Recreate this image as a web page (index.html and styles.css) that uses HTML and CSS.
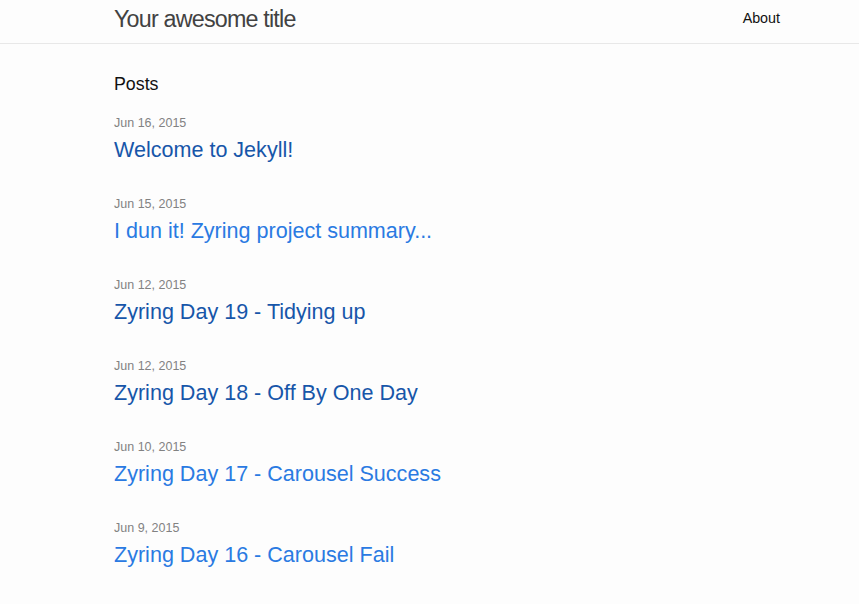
FILE: index.html
```html
<!DOCTYPE html>
<html>
<head>
<meta charset="utf-8">
<title>Your awesome title</title>
<link rel="stylesheet" href="styles.css">
</head>
<body>
<header class="site-header">
  <div class="wrapper header-row">
    <a class="site-title" href="#">Your awesome title</a>
    <nav class="site-nav"><a class="page-link" href="#">About</a></nav>
  </div>
</header>
<main class="page-content">
  <div class="wrapper">
    <h1 class="page-heading">Posts</h1>
    <ul class="post-list">
      <li><span class="post-meta">Jun 16, 2015</span><h2><a class="post-link visited" href="#">Welcome to Jekyll!</a></h2></li>
      <li><span class="post-meta">Jun 15, 2015</span><h2><a class="post-link" href="#">I dun it! Zyring project summary...</a></h2></li>
      <li><span class="post-meta">Jun 12, 2015</span><h2><a class="post-link visited" href="#">Zyring Day 19 - Tidying up</a></h2></li>
      <li><span class="post-meta">Jun 12, 2015</span><h2><a class="post-link visited" href="#">Zyring Day 18 - Off By One Day</a></h2></li>
      <li><span class="post-meta">Jun 10, 2015</span><h2><a class="post-link" href="#">Zyring Day 17 - Carousel Success</a></h2></li>
      <li><span class="post-meta">Jun 9, 2015</span><h2><a class="post-link" href="#">Zyring Day 16 - Carousel Fail</a></h2></li>
    </ul>
  </div>
</main>
</body>
</html>
```

FILE: styles.css
```css
html, body {
  margin: 0;
  padding: 0;
}
body {
  background: #fdfdfd;
  color: #111111;
  font-family: "Liberation Sans", Arial, sans-serif;
  font-size: 14.2px;
  line-height: 1.5;
}
a {
  text-decoration: none;
}
.wrapper {
  padding-left: 114px;
  padding-right: 79px;
}
.site-header {
  height: 43px;
  border-bottom: 1px solid #e8e8e8;
}
.header-row {
  display: flex;
  justify-content: space-between;
  align-items: center;
  height: 43px;
}
.site-title {
  font-size: 23.3px;
  letter-spacing: -0.8px;
  line-height: 36px;
  color: #424242;
  margin-top: -6px;
}
.page-link {
  color: #111111;
  font-size: 14.3px;
  line-height: 20px;
  display: block;
  margin-top: -7px;
}
.page-content {
  padding-top: 25px;
}
.page-heading {
  margin: 0 0 13px;
  font-size: 17.8px;
  font-weight: normal;
  line-height: 30px;
}
.post-list {
  list-style: none;
  margin: 0;
  padding: 0;
}
.post-list li {
  margin-bottom: 25px;
}
.post-meta {
  display: block;
  font-size: 12.5px;
  line-height: 18px;
  padding-top: 2px;
  color: #828282;
}
.post-list h2 {
  margin: 0;
  font-weight: normal;
  font-size: 21.55px;
  line-height: 36px;
}
.post-link {
  color: #2a7ae2;
}
.post-link.visited {
  color: #1756a9;
}
```
